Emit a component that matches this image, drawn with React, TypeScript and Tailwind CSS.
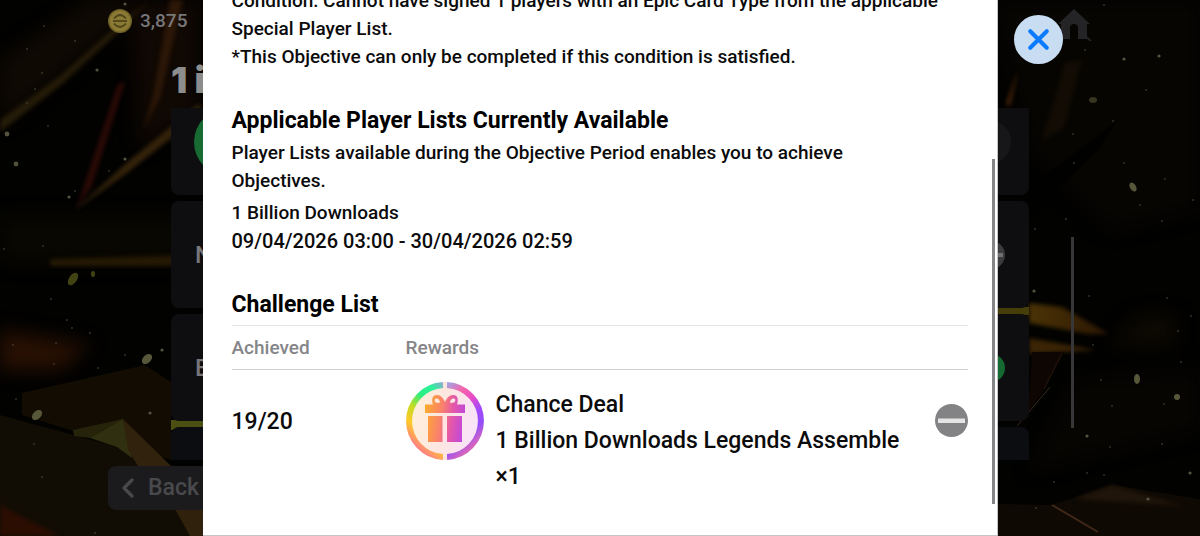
import { ChevronLeft, X } from "lucide-react";

const sparks = [
  [125, 4, 2], [44, 26, 1], [27, 49, 1], [75, 41, 1], [97, 70, 2], [42, 73, 1], [35, 89, 1], [27, 103, 1],
  [7, 134, 3], [48, 126, 1], [16, 164, 3], [125, 159, 2], [109, 171, 1], [75, 191, 1], [69, 197, 2], [4, 249, 1],
  [43, 246, 1], [51, 299, 1], [67, 320, 1], [72, 328, 1], [13, 345, 1], [56, 343, 1], [90, 333, 1], [54, 364, 1],
  [98, 368, 1], [125, 355, 1], [162, 350, 2], [16, 399, 1], [150, 413, 2], [34, 444, 1], [42, 477, 1], [95, 533, 1],
  [1104, 5, 1], [1085, 50, 1], [1124, 59, 2], [1159, 56, 2], [1146, 90, 1], [1113, 121, 1], [1073, 134, 1],
  [1074, 163, 1], [1124, 163, 1], [1165, 179, 1], [1193, 200, 1], [1140, 205, 1], [1066, 219, 1], [1035, 229, 1],
  [1162, 221, 1], [1034, 291, 2], [1089, 296, 1], [1167, 298, 1], [1191, 316, 1], [1178, 331, 1], [1093, 345, 1],
  [1181, 362, 1], [1101, 380, 1], [1112, 406, 1], [1164, 404, 1], [1087, 436, 2], [1110, 447, 1], [1162, 444, 1],
  [1087, 473, 1], [1104, 475, 1], [1054, 482, 1], [1036, 508, 1], [1148, 499, 2], [1190, 473, 2],
];

const Backdrop = () => (
  <svg
    className="absolute inset-0 h-full w-full"
    viewBox="0 0 1200 536"
    preserveAspectRatio="none"
    aria-hidden="true"
  >
    <defs>
      <filter id="soft" colorInterpolationFilters="sRGB">
        <feGaussianBlur stdDeviation="2" />
      </filter>
      <filter id="wide" colorInterpolationFilters="sRGB">
        <feGaussianBlur stdDeviation="9" />
      </filter>
      <linearGradient id="gold" x1="0" x2="1">
        <stop offset="0" stopColor="#4b3305" />
        <stop offset="1" stopColor="#2b1604" />
      </linearGradient>
    </defs>
    <rect width="1200" height="536" fill="#020201" />

    {/* Wide glows */}
    <g filter="url(#wide)">
      <path d="M0 60L90 0H150L0 125Z" fill="#0f0903" />
      <path d="M130 0H200V110L140 150Z" fill="#100803" />
      <path d="M0 216H200V262H0Z" fill="#090701" />
      <path d="M0 330L90 345L60 370H0Z" fill="#281003" />
      <path d="M990 0H1200V210L1110 230L1030 150Z" fill="#070502" />
      <path d="M1075 380L1200 370V430L1030 470Z" fill="#070502" />
      <path d="M1140 315H1175V345H1110Z" fill="#0d0902" />
    </g>

    {/* Light streaks */}
    <g filter="url(#soft)">
      <path d="M0 120L60 76L112 30L150 0L118 32L62 84L0 132Z" fill="#251b08" />
      <path d="M118 84L125 82L92 185L76 210Z" fill="#2c0a06" />
      <path d="M74 211L130 160L200 103V115L128 172Z" fill="#35230a" />
      <path d="M170 0H183L160 98L143 130L153 96Z" fill="#2c1707" />
      <path d="M50 259L190 255V266H50Z" fill="#251903" />
      <path d="M1065 62L1082 60L1064 128L1042 140Z" fill="#120c04" />
      <path d="M1006 104L1018 70L1010 106Z" fill="#4a2408" />
      <path d="M1029 303L1062 307L1109 334L1088 334L1029 323Z" fill="url(#gold)" />
      <path d="M1029 338L1096 350L1029 354Z" fill="#3b2405" />
    </g>
    <path d="M1117 121L1098 150L1030 218L1029 188Z" fill="#010100" />

    {/* Ground facets */}
    <path d="M22 393L145 365L171 382V460L60 427L22 415Z" fill="#120c03" />
    <path d="M0 415L118 447L172 466L205 536H0Z" fill="#110d04" />
    <path d="M73 430L123 419L90 438L74 436Z" fill="#25240a" />
    <path d="M123 419L90 438L117 447L132 458Z" fill="#303010" />
    <path d="M123 419L171 466H138L128 450Z" fill="#30220c" />
    <path d="M170 500H205V536H190Z" fill="#2f210c" />
    <path d="M0 505L60 536H0Z" fill="#2b0d02" filter="url(#soft)" />
    <path d="M171 420H205V430H171Z" fill="#4b5012" />
    <path d="M990 307H1029V315H990Z" fill="#463e08" />
    <path d="M1032 352H1064L1044 390L1018 425L1029 400Z" fill="#0e0603" />
    <path d="M1050 387L1017 426" stroke="#39291b" />
    <path d="M1062 353L1044 389" stroke="#29150c" />
    <path d="M998 504L1052 505L1112 485L1200 499V536H998Z" fill="#0e0903" />
    <path d="M1075 499L1112 485L1185 506Z" fill="#20150a" filter="url(#soft)" />
    <path d="M1052 505L1098 532" stroke="#402717" strokeWidth="2" />

    {/* Dust */}
    <g fill="#55523f">
      {sparks.map(([x, y, r]) => (
        <circle key={`${x}-${y}`} cx={x} cy={y} r={r * 0.8} />
      ))}
    </g>
    <g fill="#57573a">
      <ellipse cx="73" cy="279" rx="4" ry="7" fill="#414412" transform="rotate(35 73 279)" />
      <ellipse cx="93" cy="274" rx="2" ry="3" fill="#414412" />
      <ellipse cx="147" cy="359" rx="4" ry="6" transform="rotate(45 147 359)" />
      <ellipse cx="37" cy="415" rx="4" ry="6" transform="rotate(45 37 415)" />
      <ellipse cx="1093" cy="100" rx="4" ry="3" fill="#36351f" />
      <ellipse cx="1133" cy="187" rx="3" ry="5" transform="rotate(-30 1133 187)" />
      <ellipse cx="1137" cy="379" rx="3" ry="5" />
      <ellipse cx="1177" cy="397" rx="3" ry="3" />
    </g>
  </svg>
);

const CoinIcon = () => (
  <svg className="size-6" viewBox="0 0 24 24" aria-hidden="true">
    <circle cx="12" cy="12" r="12" fill="#6f6126" />
    <circle cx="12" cy="12" r="10.500" fill="#8a7a33" />
    <g fill="none" stroke="#51451a" strokeWidth="1.800">
      <path d="M6 9.500Q12 2.500 18 9.500" />
      <path d="M6 14.500Q12 21.500 18 14.500" />
      <path d="M5 12H19" />
    </g>
  </svg>
);

const HomeIcon = () => (
  <svg className="h-8 w-9" viewBox="0 0 36 32" fill="#242427" aria-hidden="true">
    <path d="M18 0L34 15H31V30H22V19Q22 15 18 15Q14 15 14 19V30H5V15H2Z" />
    <path d="M29 27L35 32" stroke="#242427" strokeWidth="2" />
  </svg>
);

const StatusIcon = () => (
  <svg className="block size-[33px]" viewBox="0 0 33 33" role="img" aria-label="Not achieved">
    <circle cx="16.500" cy="16.500" r="16.500" fill="#838386" />
    <path d="M3 14.500H30V19H3Z" fill="#e4e4e5" />
  </svg>
);

const GiftIcon = () => (
  <svg className="block size-[78px] shrink-0" viewBox="0 0 78 78" role="img" aria-label="Chance Deal">
    <defs>
      <linearGradient id="ringLeft" x1="1" y1="0" x2="0.600" y2="1">
        <stop offset="0" stopColor="#7fb5c8" />
        <stop offset="0.140" stopColor="#2df29b" />
        <stop offset="0.340" stopColor="#2aef83" />
        <stop offset="0.560" stopColor="#c3dc22" />
        <stop offset="0.780" stopColor="#ffc928" />
        <stop offset="1" stopColor="#ff8480" />
      </linearGradient>
      <linearGradient id="ringRight" x1="0" y1="0" x2="0.400" y2="1">
        <stop offset="0" stopColor="#a6a1e0" />
        <stop offset="0.200" stopColor="#f565ac" />
        <stop offset="0.400" stopColor="#e94bc4" />
        <stop offset="0.600" stopColor="#a349fa" />
        <stop offset="0.800" stopColor="#944dfa" />
        <stop offset="1" stopColor="#d766bd" />
      </linearGradient>
      <linearGradient id="plate" x1="0" y1="0.400" x2="1" y2="0.600">
        <stop offset="0" stopColor="#fff0d8" />
        <stop offset="0.500" stopColor="#fde6e2" />
        <stop offset="1" stopColor="#f7e2fd" />
      </linearGradient>
      <linearGradient id="gift" gradientUnits="userSpaceOnUse" x1="18" y1="36" x2="60" y2="42">
        <stop offset="0" stopColor="#fdaa2e" />
        <stop offset="0.400" stopColor="#f9806e" />
        <stop offset="0.650" stopColor="#e457a9" />
        <stop offset="1" stopColor="#bb45e2" />
      </linearGradient>
    </defs>
    <circle cx="39" cy="39" r="36" fill="url(#plate)" />
    <path d="M37 3.060A36 36 0 0 0 37 74.940" fill="none" stroke="url(#ringLeft)" strokeWidth="6" />
    <path d="M41 3.060A36 36 0 0 1 41 74.940" fill="none" stroke="url(#ringRight)" strokeWidth="6" />
    <path d="M37 0H41V7H37ZM37 71H41V78H37Z" fill="#fbe5dd" />
    <g fill="url(#gift)">
      <path d="M19 22.500H59V31H19Z" />
      <path d="M22 34H36.500V60H22ZM41 34H56V60H41Z" />
      <path
        fillRule="evenodd"
        d="M27 23C25 16 27 13 31 13C35 13 37 16 39 20C41 16 43 13 47 13C51 13 53 16 51 23ZM30 16.500C28 17 28.500 20 30 20.500L33.500 21C34.500 19 32.500 16 30 16.500ZM48 16.500C50 17 49.500 20 48 20.500L44.500 21C43.500 19 45.500 16 48 16.500Z"
      />
    </g>
  </svg>
);

const ObjectivesPage = () => (
  <main className="relative flex h-screen flex-col px-[9%] text-[#77777a]">
    <header className="flex h-[60px] items-start justify-between pt-[9px]">
      <div className="flex items-center gap-2 text-[19px] leading-6 font-medium">
        <CoinIcon />
        <span>3,875</span>
      </div>
      <a href="#home" aria-label="Home">
        <HomeIcon />
      </a>
    </header>
    <div className="flex min-h-0 flex-1">
      <section className="mr-[42px] ml-[63px] flex flex-1 flex-col">
        <h1 className="h-12 font-['Inter'] text-[36px] leading-[40px] font-black text-[#8d8d8d]">1 i</h1>
        <ul className="flex h-[352px] flex-col gap-[6px] overflow-hidden text-2xl font-medium">
          <li className="relative h-[87px] shrink-0 overflow-hidden rounded-b-lg bg-[#0e0e11]">
            <span className="absolute top-0 left-[23px] size-[68px] rounded-full bg-[#176b32]" />
            <span className="absolute top-3 right-[18px] size-11 rounded-full bg-[#17171a]" />
          </li>
          <li className="flex h-[107px] shrink-0 items-center justify-between rounded-lg bg-[#0e0e11] px-6">
            <span>N</span>
            <span className="flex size-7 items-center justify-center rounded-full bg-[#3c3c3e]">
              <span className="h-1 w-6 bg-[#707072]" />
            </span>
          </li>
          <li className="flex h-[107px] shrink-0 items-center justify-between rounded-lg bg-[#0e0e11] px-6">
            <span>B</span>
            <span className="size-7 rounded-full bg-[#146a31]" />
          </li>
          <li className="h-[107px] shrink-0 rounded-lg bg-[#0c0d11]" />
        </ul>
      </section>
      <div className="mt-[177px] mr-[18px] h-[191px] w-[3px] bg-[#37373a]" />
    </div>
    <button className="mb-[26px] flex h-11 w-32 items-center gap-1 self-start rounded-lg bg-[#1b1b1e] px-1 text-[23px] font-medium text-[#49494c]">
      <ChevronLeft className="shrink-0" size={32} strokeWidth={2.5} />
      Back
    </button>
  </main>
);

const ObjectiveDialog = () => (
  <div className="absolute inset-0 flex justify-center">
    <div role="dialog" aria-label="Objective details" className="relative w-[66.25%]">
      <div className="flex h-full flex-col justify-end overflow-hidden border-r border-b border-[#c4c4c6] bg-white px-[29px] pb-10 text-[19px] leading-7 font-medium text-[#0b0b0c]">
        <p>
          Condition: Cannot have signed 1 players with an Epic Card Type from the applicable Special Player List.
        </p>
        <p>*This Objective can only be completed if this condition is satisfied.</p>

        <h2 className="mt-[34px] text-[23px] leading-8 font-bold text-black">
          Applicable Player Lists Currently Available
        </h2>
        <p className="mt-0.5 pr-12">
          Player Lists available during the Objective Period enables you to achieve Objectives.
        </p>
        <p className="mt-1">1 Billion Downloads</p>
        <p className="text-xl leading-7">09/04/2026 03:00 - 30/04/2026 02:59</p>

        <h2 className="mt-[34px] text-[23px] leading-8 font-bold text-black">Challenge List</h2>
        <table className="mt-1 w-full table-fixed text-left">
          <thead className="text-[#858588]">
            <tr className="h-11 border-y border-t-[#e4e4e5] border-b-[#cfcfd1]">
              <th scope="col" className="w-[174px] font-medium">Achieved</th>
              <th scope="col" className="font-medium">Rewards</th>
              <th className="w-[60px]" aria-label="Status" />
            </tr>
          </thead>
          <tbody className="text-[23px] leading-9">
            <tr className="align-top">
              <td className="pt-[34px]">19/20</td>
              <td className="pt-3">
                <div className="flex gap-3">
                  <GiftIcon />
                  <div className="pt-[5px]">
                    <p>Chance Deal</p>
                    <p>1 Billion Downloads Legends Assemble ×1</p>
                  </div>
                </div>
              </td>
              <td className="pt-[34px] pl-[27px]">
                <StatusIcon />
              </td>
            </tr>
          </tbody>
        </table>
      </div>

      {/* Scrollbar thumb */}
      <div className="absolute right-[3px] bottom-8 h-[345px] w-[3px] bg-[#858588]" />

      <button
        aria-label="Close"
        className="absolute top-[15px] left-full ml-4 flex size-[49px] items-center justify-center rounded-full bg-[#c9ddf2] text-[#0a7aff]"
      >
        <X size={33} strokeWidth={3} />
      </button>
    </div>
  </div>
);

export default function App() {
  return (
    <div className="relative h-screen overflow-hidden bg-black font-['Roboto',sans-serif]">
      <Backdrop />
      <ObjectivesPage />
      <ObjectiveDialog />
    </div>
  );
}
